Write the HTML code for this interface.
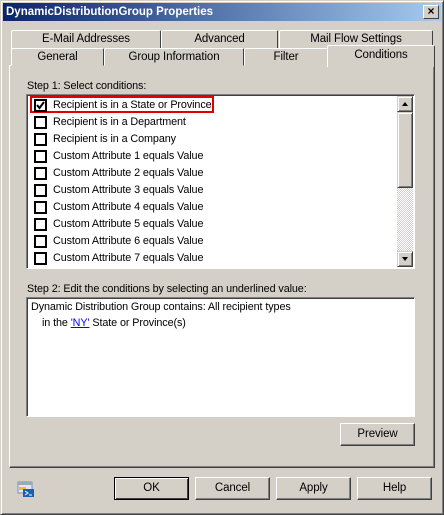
<!DOCTYPE html>
<html><head><style>
*{box-sizing:border-box;margin:0;padding:0}
body{width:444px;height:515px;background:#d4d0c8;font-family:"Liberation Sans",Arial,sans-serif;font-size:10.8px;letter-spacing:-0.1px;color:#000;position:relative;overflow:hidden}
.win{position:absolute;left:0;top:0;width:444px;height:515px;border:1px solid #404040;border-top-color:#d4d0c8;border-left-color:#d4d0c8;box-shadow:inset 1px 1px #fff,inset -1px -1px #808080}
.title{position:absolute;left:3px;top:3px;width:438px;height:18px;background:linear-gradient(90deg,#0a246a,#a6caf0);color:#fff;font-weight:bold;font-size:11.5px;letter-spacing:0;line-height:18px;padding-left:3px}
.x{position:absolute;right:2px;top:2px;width:16px;height:14px;background:#d4d0c8;border:1px solid;border-color:#fff #404040 #404040 #fff;color:#000;font-size:12px;line-height:11px;text-align:center;font-weight:bold}
.a{position:absolute}
.tab{position:absolute;height:19px;border:1px solid;border-color:#fff #404040 transparent #fff;border-radius:2px 2px 0 0;text-align:center;line-height:17px;background:#d4d0c8;font-size:11.5px}
.panel{position:absolute;left:9px;top:65px;width:426px;height:403px;border:1px solid;border-color:#fff #404040 #404040 #fff;box-shadow:inset -1px -1px #808080}
.sunk{position:absolute;background:#fff;border:1px solid;border-color:#808080 #fff #fff #808080;box-shadow:inset 1px 1px #404040}
.row{position:absolute;left:7px;height:17px;line-height:17px}
.cb{position:absolute;left:0;top:2px;width:13px;height:13px;border:2px solid #000;background:#fff}
.row span{position:absolute;left:19px;white-space:nowrap}
.btn{position:absolute;height:23px;border:1px solid;border-color:#fff #404040 #404040 #fff;box-shadow:inset -1px -1px #808080;text-align:center;line-height:21px;font-size:11.5px}
.sb{position:absolute;width:16px;background:#d4d0c8;border:1px solid;border-color:#d4d0c8 #404040 #404040 #d4d0c8;box-shadow:inset 1px 1px #fff,inset -1px -1px #808080}
</style></head><body>
<div class="win"></div>
<div class="title">DynamicDistributionGroup Properties<div class="x">×</div></div>

<div class="tab" style="left:11px;top:30px;width:150px">E-Mail Addresses</div>
<div class="tab" style="left:161px;top:30px;width:117px">Advanced</div>
<div class="tab" style="left:279px;top:30px;width:154px">Mail Flow Settings</div>
<div class="panel"></div>
<div class="tab" style="left:11px;top:48px;width:93px;height:18px">General</div>
<div class="tab" style="left:104px;top:48px;width:140px;height:18px">Group Information</div>
<div class="tab" style="left:244px;top:48px;width:84px;height:18px">Filter</div>
<div class="tab" style="left:327px;top:45px;width:108px;height:22px;border-bottom:none;line-height:18px">Conditions</div>

<div class="a" style="left:27px;top:80px">Step 1: Select conditions:</div>
<div class="sunk" style="left:26px;top:94px;width:389px;height:175px">
 <div class="a" style="left:3px;top:1px;width:184px;height:17px;border:2px solid #e00000"></div>
 <div class="row" style="top:2px"><div class="cb"><svg width="9" height="9" style="position:absolute;left:0;top:0"><path d="M1 4 L3.5 7 L8 1" stroke="#000" stroke-width="2" fill="none"/></svg></div><span>Recipient is in a State or Province</span></div>
 <div class="row" style="top:19px"><div class="cb"></div><span>Recipient is in a Department</span></div>
 <div class="row" style="top:36px"><div class="cb"></div><span>Recipient is in a Company</span></div>
 <div class="row" style="top:53px"><div class="cb"></div><span>Custom Attribute 1 equals Value</span></div>
 <div class="row" style="top:70px"><div class="cb"></div><span>Custom Attribute 2 equals Value</span></div>
 <div class="row" style="top:87px"><div class="cb"></div><span>Custom Attribute 3 equals Value</span></div>
 <div class="row" style="top:104px"><div class="cb"></div><span>Custom Attribute 4 equals Value</span></div>
 <div class="row" style="top:121px"><div class="cb"></div><span>Custom Attribute 5 equals Value</span></div>
 <div class="row" style="top:138px"><div class="cb"></div><span>Custom Attribute 6 equals Value</span></div>
 <div class="row" style="top:155px"><div class="cb"></div><span>Custom Attribute 7 equals Value</span></div>
 <div class="a" style="left:370px;top:1px;width:16px;height:171px;background:repeating-conic-gradient(#fff 0 25%,#d4d0c8 0 50%) 0 0/2px 2px"></div>
 <div class="sb" style="left:370px;top:1px;height:16px"><svg width="14" height="14"><path d="M4 9 L10 9 L7 5 Z" fill="#000"/></svg></div>
 <div class="sb" style="left:370px;top:17px;height:76px"></div>
 <div class="sb" style="left:370px;top:156px;height:16px"><svg width="14" height="14"><path d="M4 5 L10 5 L7 9 Z" fill="#000"/></svg></div>
</div>

<div class="a" style="left:27px;top:283px">Step 2: Edit the conditions by selecting an underlined value:</div>
<div class="sunk" style="left:26px;top:297px;width:389px;height:120px">
 <div class="a" style="left:4px;top:3px;white-space:nowrap">Dynamic Distribution Group contains: All recipient types</div>
 <div class="a" style="left:15px;top:19px;white-space:nowrap">in the <span style="color:#0000ff;text-decoration:underline">'NY'</span> State or Province(s)</div>
</div>

<div class="btn" style="left:340px;top:423px;width:75px">Preview</div>

<svg class="a" style="left:17px;top:481px" width="18" height="16"><rect x="1" y="1" width="14" height="11" fill="#dfe8f4" stroke="#7a8fb0"/><rect x="1" y="1" width="14" height="3" fill="#9ab"/><rect x="2" y="6" width="7" height="3" fill="#f0c020"/><rect x="6" y="8" width="11" height="8" fill="#1a5fb4"/><path d="M8 10 L11 12 L8 14" stroke="#fff" fill="none"/><path d="M12 14 H15" stroke="#fff"/></svg>

<div class="btn" style="left:114px;top:477px;width:75px;border:1px solid #000;box-shadow:inset 1px 1px #fff,inset -1px -1px #404040">OK</div>
<div class="btn" style="left:195px;top:477px;width:75px">Cancel</div>
<div class="btn" style="left:276px;top:477px;width:75px">Apply</div>
<div class="btn" style="left:357px;top:477px;width:75px">Help</div>
</body></html>
